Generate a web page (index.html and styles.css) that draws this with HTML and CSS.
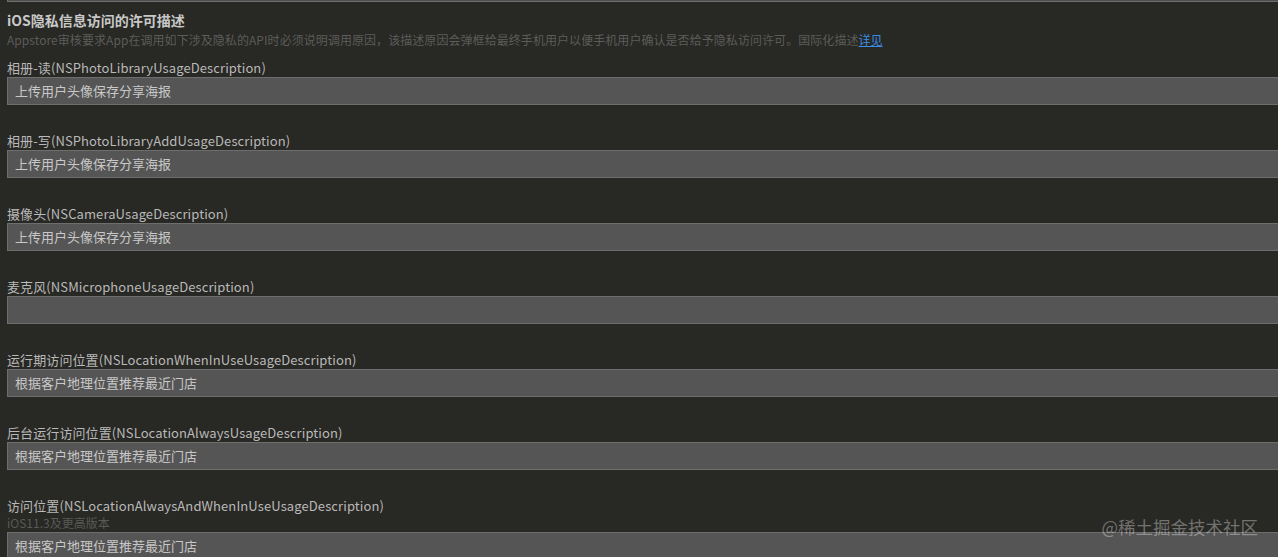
FILE: index.html
```html
<!DOCTYPE html>
<html lang="zh-CN">
<head>
<meta charset="utf-8">
<title>iOS隐私信息访问的许可描述</title>
<link rel="stylesheet" href="styles.css">
</head>
<body>
<div class="page">
  <div class="prev-input"></div>
  <h2 class="title">iOS隐私信息访问的许可描述</h2>
  <p class="desc">Appstore审核要求App在调用如下涉及隐私的API时必须说明调用原因，该描述原因会弹框给最终手机用户以便手机用户确认是否给予隐私访问许可。国际化描述<a class="link" href="#">详见</a></p>

  <div class="field">
    <label class="label">相册-读(NSPhotoLibraryUsageDescription)</label>
    <div class="input">上传用户头像保存分享海报</div>
  </div>
  <div class="field">
    <label class="label">相册-写(NSPhotoLibraryAddUsageDescription)</label>
    <div class="input">上传用户头像保存分享海报</div>
  </div>
  <div class="field">
    <label class="label">摄像头(NSCameraUsageDescription)</label>
    <div class="input">上传用户头像保存分享海报</div>
  </div>
  <div class="field">
    <label class="label">麦克风(NSMicrophoneUsageDescription)</label>
    <div class="input"></div>
  </div>
  <div class="field">
    <label class="label">运行期访问位置(NSLocationWhenInUseUsageDescription)</label>
    <div class="input">根据客户地理位置推荐最近门店</div>
  </div>
  <div class="field">
    <label class="label">后台运行访问位置(NSLocationAlwaysUsageDescription)</label>
    <div class="input">根据客户地理位置推荐最近门店</div>
  </div>
  <div class="field">
    <label class="label">访问位置(NSLocationAlwaysAndWhenInUseUsageDescription)</label>
    <div class="note">iOS11.3及更高版本</div>
    <div class="input">根据客户地理位置推荐最近门店</div>
  </div>
</div>
<div class="watermark">@稀土掘金技术社区</div>
</body>
</html>
```

FILE: styles.css
```css
html, body {
  margin: 0;
  padding: 0;
  background: #282824;
  height: 100%;
  overflow: hidden;
}
body {
  font-family: "Noto Sans CJK SC", "Noto Sans", sans-serif;
  color: #c4c4c4;
  position: relative;
}
.page {
  padding-left: 7px;
  display: flex;
  flex-direction: column;
}
.prev-input {
  height: 1px;
  background: #4e4e4e;
  border-bottom: 1px solid #6e6e6e;
  border-left: 1px solid #6e6e6e;
}
.title {
  margin: 8px 0 0;
  font-size: 14px;
  line-height: 20px;
  font-weight: bold;
  color: #c8c8c8;
}
.desc {
  margin: 2px 0 11px;
  font-size: 12px;
  line-height: 16px;
  letter-spacing: 0.06px;
  color: #5c5c5a;
}
.link {
  color: #3a8ee6;
  text-decoration: underline;
}
.field {
  display: flex;
  flex-direction: column;
  margin-bottom: 27px;
}
.label {
  font-size: 13px;
  line-height: 18px;
  letter-spacing: 0.1px;
  color: #b9b9b9;
}
.note {
  font-size: 12px;
  line-height: 15px;
  margin-bottom: 2px;
  color: #5a5a58;
}
.input {
  box-sizing: border-box;
  height: 28px;
  margin-right: -4px;
  padding-left: 7px;
  background: #555555;
  border: 1px solid #6e6e6e;
  border-right: none;
  font-size: 13px;
  line-height: 26px;
  color: #c8c8c8;
}
.watermark {
  position: absolute;
  right: 20px;
  bottom: 19px;
  font-size: 17.5px;
  line-height: 22px;
  color: rgba(255, 255, 255, 0.35);
}
```
